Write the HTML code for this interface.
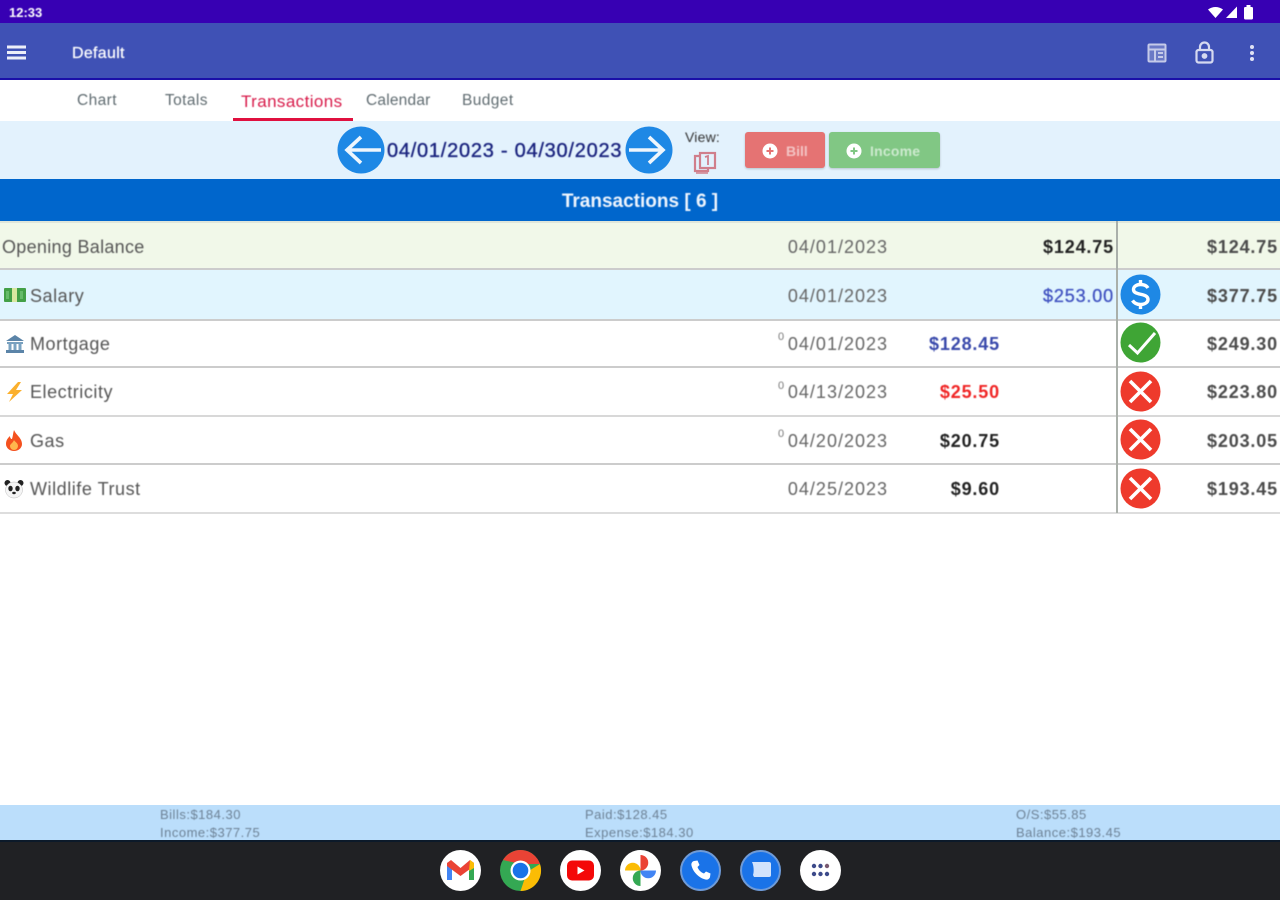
<!DOCTYPE html>
<html><head><meta charset="utf-8"><title>Transactions</title>
<style>
html,body{margin:0;padding:0;width:1280px;height:900px;overflow:hidden;background:#fff}
body{font-family:"Liberation Sans",sans-serif;position:relative}
.b{position:absolute}
.t{position:absolute;white-space:nowrap;line-height:20px;filter:blur(.45px);letter-spacing:.3px}
.r{text-align:right}
.row{font-size:18px;color:#555;letter-spacing:.55px}
.amt{font-size:18px;font-weight:bold;color:#222;letter-spacing:.85px}
.bal{font-size:18px;color:#4c4c4c;font-weight:bold;letter-spacing:.85px}
.date{font-size:18px;color:#666;letter-spacing:1px}
.tab{font-size:15.500px;color:#5f6b70;letter-spacing:.4px}
.foot{font-size:13px;color:#6d8296;line-height:14px;letter-spacing:.5px}
.sup{font-size:11px;color:#777}
svg{position:absolute;overflow:visible}
</style></head><body>
<div class="b" style="left:0;top:0;width:1280px;height:23px;background:#3700b3"></div>
<div class="t" style="left:9px;top:3px;font-size:13px;color:#fff;font-weight:bold;letter-spacing:0">12:33</div>
<svg style="left:0;top:0" width="1280" height="23"><path d="M1208 9.500Q1215.500 4.500 1223 9.500L1215.500 18Z" fill="#fff"/><path d="M1226 18L1237 6.500V18Z" fill="#fff"/><rect x="1244" y="7" width="9" height="12.500" rx="1.200" fill="#fff"/><rect x="1246.500" y="5" width="4" height="3" fill="#fff"/></svg>

<div class="b" style="left:0;top:23px;width:1280px;height:56px;background:#3f51b5"></div>
<div class="b" style="left:0;top:78px;width:1280px;height:2px;background:#1a0fa8"></div>
<svg style="left:7px;top:45px" width="20" height="16"><path d="M0 2H19M0 7.500H19M0 13H19" stroke="#eceef9" stroke-width="3"/></svg>
<div class="t" style="left:72px;top:44px;font-size:16px;color:#fff;letter-spacing:.3px;-webkit-text-stroke:.25px #fff">Default</div>
<svg style="left:1147px;top:43px" width="20" height="20" fill="none" stroke="#c5cae9" stroke-width="2"><rect x="1.500" y="1.500" width="17" height="17" rx="1" fill="#6b79c6"/><path d="M1.500 6.500H18.500M8 6.500V18.500" /><path d="M11 10H16M11 14H16" stroke-width="2"/></svg>
<svg style="left:1195px;top:41px" width="20" height="23" fill="none" stroke="#d5d9f0" stroke-width="2.200"><rect x="1.500" y="9" width="16" height="12.500" rx="2"/><path d="M5 9V6A4.500 4.500 0 0 1 14 6V9"/><circle cx="9.500" cy="15" r="1.800" fill="#d5d9f0"/></svg>
<svg style="left:1249px;top:44px" width="6" height="18" fill="#dfe2f4"><circle cx="3" cy="3" r="2"/><circle cx="3" cy="9" r="2"/><circle cx="3" cy="15" r="2"/></svg>

<div class="t tab" style="left:77px;top:91px">Chart</div>
<div class="t tab" style="left:165px;top:91px">Totals</div>
<div class="t tab" style="left:241px;top:92px;font-size:17px;color:#d81b4a">Transactions</div>
<div class="t tab" style="left:366px;top:91px;letter-spacing:.2px">Calendar</div>
<div class="t tab" style="left:462px;top:91px">Budget</div>
<div class="b" style="left:233px;top:118px;width:120px;height:2.500px;background:#e0103f"></div>

<div class="b" style="left:0;top:121px;width:1280px;height:58px;background:#e3f2fd"></div>
<div class="b" style="left:0;top:179px;width:1280px;height:42px;background:#0066cc"></div>
<svg style="left:337px;top:126px" width="48" height="48"><circle cx="24" cy="24" r="23.500" fill="#1e88e5"/><path d="M44 24H10M24 11L10 24L24 37" fill="none" stroke="#eef6fd" stroke-width="3.600"/></svg>
<div class="t" style="left:387px;top:141px;font-size:20px;color:#1a237e;letter-spacing:.75px;-webkit-text-stroke:.35px #1a237e">04/01/2023 - 04/30/2023</div>
<svg style="left:625px;top:126px" width="48" height="48"><circle cx="24" cy="24" r="23.500" fill="#1e88e5"/><path d="M4 24H38M24 11L38 24L24 37" fill="none" stroke="#eef6fd" stroke-width="3.600"/></svg>
<div class="t" style="left:685px;top:127px;font-size:14px;color:#333;letter-spacing:.2px">View:</div>
<svg style="left:693px;top:150px" width="25" height="24" fill="none" stroke="#d07f8c" stroke-width="2.200"><path d="M6 6H2V21H15V18"/><rect x="7" y="3" width="15" height="15"/><path d="M12 7L15 6V15" stroke-width="1.800"/><path d="M3 23H15" stroke-width="1.500"/></svg>

<div class="b" style="left:745px;top:132px;width:80px;height:36px;background:#e57373;border-radius:3px;box-shadow:0 1px 2px rgba(0,0,0,.2)"></div>
<svg style="left:762px;top:143px" width="16" height="16"><circle cx="8" cy="8" r="7.500" fill="#fff"/><path d="M4.500 8H11.500M8 4.500V11.500" stroke="#e57373" stroke-width="2"/></svg>
<div class="t" style="left:786px;top:141px;font-size:14px;font-weight:bold;color:#f3c4c4;letter-spacing:0">Bill</div>
<div class="b" style="left:829px;top:132px;width:111px;height:36px;background:#81c784;border-radius:3px;box-shadow:0 1px 2px rgba(0,0,0,.2)"></div>
<svg style="left:846px;top:143px" width="16" height="16"><circle cx="8" cy="8" r="7.500" fill="#fff"/><path d="M4.500 8H11.500M8 4.500V11.500" stroke="#81c784" stroke-width="2"/></svg>
<div class="t" style="left:870px;top:141px;font-size:14px;font-weight:bold;color:#cdeacf;letter-spacing:.2px">Income</div>

<div class="t" style="left:0;width:1280px;top:192px;text-align:center;font-size:19px;font-weight:bold;color:#eef5fd;letter-spacing:0">Transactions [ 6 ]</div>

<!-- rows -->
<div class="b" style="left:0;top:221px;width:1280px;height:2px;background:#dfe6da"></div>
<div class="b" style="left:0;top:223px;width:1280px;height:46px;background:#f1f8e9"></div>
<div class="b" style="left:0;top:270px;width:1280px;height:49px;background:#e1f5fe"></div>
<div class="b" style="left:0;top:268px;width:1280px;height:2px;background:#ccc"></div>
<div class="b" style="left:0;top:319px;width:1280px;height:1.500px;background:#ccc"></div>
<div class="b" style="left:0;top:366px;width:1280px;height:2px;background:#ccc"></div>
<div class="b" style="left:0;top:415px;width:1280px;height:1.500px;background:#d8d8d8"></div>
<div class="b" style="left:0;top:463px;width:1280px;height:2px;background:#ccc"></div>
<div class="b" style="left:0;top:512px;width:1280px;height:1.500px;background:#ddd"></div>
<div class="b" style="left:1116px;top:221px;width:1.500px;height:292px;background:#aab0aa"></div>

<div class="t row" style="left:2px;top:237px;letter-spacing:.3px">Opening Balance</div>
<div class="t row" style="left:30px;top:286px">Salary</div>
<div class="t row" style="left:30px;top:334px">Mortgage</div>
<div class="t row" style="left:30px;top:382px">Electricity</div>
<div class="t row" style="left:30px;top:431px">Gas</div>
<div class="t row" style="left:30px;top:479px">Wildlife Trust</div>

<!-- emoji icons -->
<svg style="left:4px;top:288px" width="22" height="15"><rect width="22" height="14" rx="1" fill="#43a047"/><rect x="8" y="0" width="5" height="14" fill="#d9e8a0"/><rect x="2" y="3" width="3" height="8" fill="#66bb6a"/><rect x="16" y="3" width="3" height="8" fill="#66bb6a"/></svg>
<svg style="left:5px;top:335px" width="20" height="19"><path d="M10 0L19 6H1Z" fill="#5b84a8"/><rect x="2" y="7" width="16" height="2" fill="#78a0bf"/><path d="M3.500 9H6.500V15H3.500ZM8.500 9H11.500V15H8.500ZM13.500 9H16.500V15H13.500Z" fill="#7ba3c2"/><rect x="1" y="15" width="18" height="3" fill="#5b84a8"/></svg>
<svg style="left:6px;top:382px" width="16" height="20"><path d="M12 0L1 12H7L3 20L16 8H10L15 0Z" fill="#fbb02d"/></svg>
<svg style="left:5px;top:430px" width="18" height="21"><path d="M9 0C11 5 17 8 17 14A8 7 0 0 1 1 14C1 10 3 8 5 6C5 8 6 9 7 9C8 6 8 3 9 0Z" fill="#f4511e"/><path d="M9 10C10 12 13 13 13 16A4 4 0 0 1 5 16C5 14 8 13 9 10Z" fill="#ffb74d"/></svg>
<svg style="left:4px;top:479px" width="20" height="20"><circle cx="3.500" cy="4" r="3" fill="#222"/><circle cx="16.500" cy="4" r="3" fill="#222"/><ellipse cx="10" cy="11" rx="8.500" ry="8" fill="#f5f5f5" stroke="#bbb" stroke-width=".5"/><ellipse cx="6.500" cy="9.500" rx="2.200" ry="2.800" fill="#222"/><ellipse cx="13.500" cy="9.500" rx="2.200" ry="2.800" fill="#222"/><ellipse cx="10" cy="14" rx="1.800" ry="1.200" fill="#222"/></svg>

<!-- dates -->
<div class="t date r" style="right:392px;top:237px">04/01/2023</div>
<div class="t date r" style="right:392px;top:286px">04/01/2023</div>
<div class="t date r" style="right:392px;top:334px">04/01/2023</div>
<div class="t date r" style="right:392px;top:382px">04/13/2023</div>
<div class="t date r" style="right:392px;top:431px">04/20/2023</div>
<div class="t date r" style="right:392px;top:479px">04/25/2023</div>
<div class="t sup" style="left:778px;top:327px">0</div>
<div class="t sup" style="left:778px;top:376px">0</div>
<div class="t sup" style="left:778px;top:424px">0</div>

<!-- amounts -->
<div class="t amt r" style="right:280px;top:334px;color:#3949ab">$128.45</div>
<div class="t amt r" style="right:280px;top:382px;color:#f02525">$25.50</div>
<div class="t amt r" style="right:280px;top:431px">$20.75</div>
<div class="t amt r" style="right:280px;top:479px">$9.60</div>
<div class="t amt r" style="right:166px;top:237px">$124.75</div>
<div class="t amt r" style="right:166px;top:286px;color:#3f51c0;font-weight:normal;-webkit-text-stroke:.3px #3f51c0">$253.00</div>

<div class="t bal r" style="right:2px;top:237px">$124.75</div>
<div class="t bal r" style="right:2px;top:286px">$377.75</div>
<div class="t bal r" style="right:2px;top:334px">$249.30</div>
<div class="t bal r" style="right:2px;top:382px">$223.80</div>
<div class="t bal r" style="right:2px;top:431px">$203.05</div>
<div class="t bal r" style="right:2px;top:479px">$193.45</div>

<!-- status -->
<svg style="left:1120px;top:274px" width="41" height="41"><circle cx="20.500" cy="20.500" r="20" fill="#1e88e5"/><path d="M28 14C26.500 11.500 23.500 10.500 20.500 10.500C16.500 10.500 13.500 12.500 13.500 15.500C13.500 22 28 18.500 28 25.500C28 28.500 24.500 30.500 20.500 30.500C17 30.500 14.500 29.500 12.500 26.500M20.500 6V10.500M20.500 30.500V35" fill="none" stroke="#fff" stroke-width="3.400"/></svg>
<svg style="left:1120px;top:322px" width="41" height="41"><circle cx="20.500" cy="20.500" r="20" fill="#3fa535"/><path d="M9 23L17.500 31L35 11" fill="none" stroke="#fff" stroke-width="3"/></svg>
<svg style="left:1120px;top:371px" width="41" height="41"><circle cx="20.500" cy="20.500" r="20" fill="#ee3a2c"/><path d="M10 10L31 31M31 10L10 31" stroke="#fff" stroke-width="3.600"/></svg>
<svg style="left:1120px;top:419px" width="41" height="41"><circle cx="20.500" cy="20.500" r="20" fill="#ee3a2c"/><path d="M10 10L31 31M31 10L10 31" stroke="#fff" stroke-width="3.600"/></svg>
<svg style="left:1120px;top:468px" width="41" height="41"><circle cx="20.500" cy="20.500" r="20" fill="#ee3a2c"/><path d="M10 10L31 31M31 10L10 31" stroke="#fff" stroke-width="3.600"/></svg>

<!-- footer -->
<div class="b" style="left:0;top:805px;width:1280px;height:35px;background:#bbdefb"></div>
<div class="t foot" style="left:160px;top:808px">Bills:$184.30</div>
<div class="t foot" style="left:160px;top:826px">Income:$377.75</div>
<div class="t foot" style="left:585px;top:808px">Paid:$128.45</div>
<div class="t foot" style="left:585px;top:826px">Expense:$184.30</div>
<div class="t foot" style="left:1016px;top:808px">O/S:$55.85</div>
<div class="t foot" style="left:1016px;top:826px">Balance:$193.45</div>

<!-- dock -->
<div class="b" style="left:0;top:840px;width:1280px;height:60px;background:#202124"></div>
<div class="b" style="left:0;top:840px;width:1280px;height:1.500px;background:#0c1a2a"></div>
<svg style="left:440px;top:850px" width="41" height="41"><circle cx="20.500" cy="20.500" r="20.500" fill="#fff"/><path d="M7 30V13L12 11V30Z" fill="#4285f4"/><path d="M29 30V11L34 13V30Z" fill="#34a853"/><path d="M7 13L11 10L20.500 18L30 10L34 13V16L20.500 26L7 16Z" fill="#ea4335"/><path d="M30 10L34 13V18L29 21Z" fill="#fbbc04"/></svg>
<svg style="left:500px;top:850px" width="41" height="41"><circle cx="20.500" cy="20.500" r="20.500" fill="#34a853"/><path d="M3 10A20.500 20.500 0 0 1 40 14L20.500 14Z" fill="#ea4335"/><path d="M40 14A20.500 20.500 0 0 1 20.500 41L27 22Z" fill="#fbbc04"/><circle cx="20.500" cy="20.500" r="10" fill="#fff"/><circle cx="20.500" cy="20.500" r="7.800" fill="#1a73e8"/></svg>
<svg style="left:560px;top:850px" width="41" height="41"><circle cx="20.500" cy="20.500" r="20.500" fill="#fff"/><rect x="7" y="10.500" width="27" height="20" rx="5" fill="#f40808"/><path d="M17.500 16.500L24.500 20.500L17.500 24.500Z" fill="#fff"/></svg>
<svg style="left:620px;top:850px" width="41" height="41"><circle cx="20.500" cy="20.500" r="20.500" fill="#fff"/><path d="M20.500 20.500H5A7.750 7.750 0 0 1 20.500 20.500Z" fill="#fbbc04"/><path d="M20.500 20.500V5A7.750 7.750 0 0 1 20.500 20.500Z" fill="#ea4335"/><path d="M20.500 20.500H36A7.750 7.750 0 0 1 20.500 20.500Z" fill="#4285f4"/><path d="M20.500 20.500V36A7.750 7.750 0 0 1 20.500 20.500Z" fill="#34a853"/></svg>
<svg style="left:680px;top:850px" width="41" height="41"><circle cx="20.500" cy="20.500" r="19.500" fill="#1a73e8" stroke="#6f9bd8" stroke-width="2"/><path d="M14 11L17.500 10.500L19.500 15L17.500 17C18.500 20 21 22.500 24 23.500L26 21.500L30.500 23.500L30 27C29.500 29 27.500 30 25.500 29.500C19 28 13 22 11.500 15.500C11 13.500 12 11.500 14 11Z" fill="#fff"/></svg>
<svg style="left:740px;top:850px" width="41" height="41"><circle cx="20.500" cy="20.500" r="19.500" fill="#1a73e8" stroke="#6f9bd8" stroke-width="2"/><path d="M12 12H29A2 2 0 0 1 31 14V25A2 2 0 0 1 29 27H14L13 25C14 22 14 16 12 12Z" fill="#d2e3fc"/></svg>
<svg style="left:800px;top:850px" width="41" height="41"><circle cx="20.500" cy="20.500" r="20.500" fill="#fff"/><g fill="#3c4a8a"><circle cx="14" cy="16" r="2.200"/><circle cx="20.500" cy="16" r="2.200"/><circle cx="27" cy="16" r="2.200" fill="#7a5a70"/><circle cx="14" cy="24" r="2.200"/><circle cx="20.500" cy="24" r="2.200"/><circle cx="27" cy="24" r="2.200"/></g></svg>
</body></html>
